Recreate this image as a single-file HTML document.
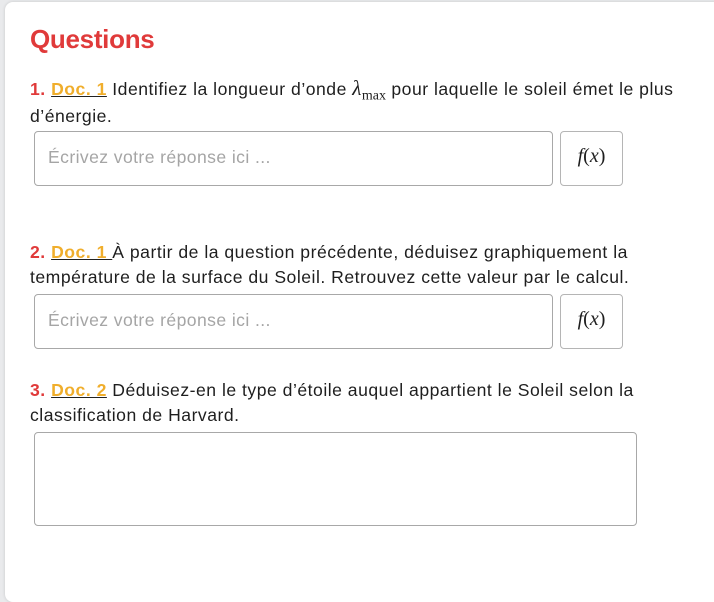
<!DOCTYPE html>
<html><head><meta charset="utf-8"><style>
*{box-sizing:border-box;margin:0;padding:0}
body{width:714px;height:569px;background:#e9eaec;font-family:"Liberation Sans",sans-serif;color:#1e1e1e;overflow:hidden;position:relative}
.card{position:absolute;left:5px;top:2px;width:740px;height:600px;background:#fff;border-radius:8px;box-shadow:0 0 3px rgba(0,0,0,.15)}
h1{position:absolute;left:30px;top:24px;font-size:26px;font-weight:bold;color:#e03a3a;letter-spacing:-0.3px}
.q{position:absolute;left:30px;font-size:17.6px;letter-spacing:0.5px;line-height:25px;width:670px}
.n{color:#e03a3a;font-weight:bold}
.d{color:#f0ae2c;font-weight:bold;text-decoration:underline;text-decoration-color:#222}
.in{position:absolute;left:34px;width:519px;height:55px;border:1px solid #a8a8a8;border-radius:4px;color:#a5a5a5;font-size:17.6px;letter-spacing:0.4px;padding:15px 0 0 13px}
.fx{position:absolute;left:560px;width:63px;height:55px;border:1px solid #b5b5b5;border-radius:4px;font-family:"Liberation Serif",serif;font-size:20px;text-align:center;padding-top:13px}
.fx i{font-style:italic}
.ta{position:absolute;left:34px;top:432px;width:603px;height:94px;border:1px solid #a8a8a8;border-radius:4px}
</style></head><body>
<div class="card"></div>
<h1>Questions</h1>
<div class="q" style="top:75px;line-height:27px"><span class="n">1.</span> <span class="d">Doc. 1</span> Identifiez la longueur d’onde <span style="font-family:'Liberation Serif',serif;font-style:italic;font-size:21px">λ</span><sub style="font-family:'Liberation Serif',serif;font-size:14px;line-height:0;letter-spacing:0">max</sub> pour laquelle le soleil émet le plus d’énergie.</div>
<div class="in" style="top:131px">Écrivez votre réponse ici ...</div>
<div class="fx" style="top:131px"><i>f</i>(<i>x</i>)</div>
<div class="q" style="top:240px;width:640px"><span class="n">2.</span> <span class="d">Doc. 1 </span>À partir de la question précédente, déduisez graphiquement la température de la surface du Soleil. Retrouvez cette valeur par le calcul.</div>
<div class="in" style="top:294px">Écrivez votre réponse ici ...</div>
<div class="fx" style="top:294px"><i>f</i>(<i>x</i>)</div>
<div class="q" style="top:378px;width:640px"><span class="n">3.</span> <span class="d">Doc. 2</span> Déduisez-en le type d’étoile auquel appartient le Soleil selon la classification de Harvard.</div>
<div class="ta"></div>
</body></html>
